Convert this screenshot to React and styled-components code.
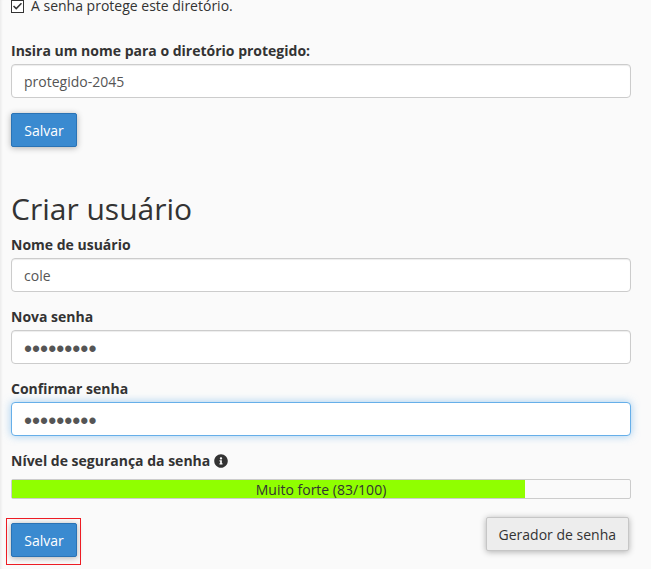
import React, { useState } from "react";
import styled, { createGlobalStyle } from "styled-components";
import { FaInfoCircle } from "react-icons/fa";

const GlobalStyle = createGlobalStyle`
  *, *::before, *::after {
    box-sizing: border-box;
  }

  body {
    margin: 0;
    background: #fafafa;
    color: #333;
    font-family: "Open Sans", "Noto Sans", sans-serif;
    font-size: 14px;
    line-height: 20px;
  }
`;

const Page = styled.main`
  padding: 0 20px 12px 11px;
  box-shadow: inset 3px 0 3px -2px rgba(0, 0, 0, 0.08);
`;

const CheckLabel = styled.label`
  display: flex;
  align-items: flex-start;
  gap: 7px;
  line-height: 11px;
`;

const Checkbox = styled.input`
  appearance: none;
  display: grid;
  place-items: center;
  width: 13px;
  height: 13px;
  margin: 0;
  border: 1px solid #333;
  background: #fff;

  &:checked::before {
    content: "";
    width: 9px;
    height: 8px;
    background: #333;
    clip-path: polygon(0 50%, 12% 38%, 36% 64%, 88% 4%, 100% 16%, 36% 92%);
  }
`;

const DirectoryForm = styled.form`
  padding-top: 28px;
`;

const UserForm = styled.form`
  padding-top: 44px;
`;

const Title = styled.h2`
  margin: 0 0 8px;
  font-size: 30px;
  font-weight: 400;
  line-height: 36px;
`;

const Field = styled.div`
  display: flex;
  flex-direction: column;
  gap: 4px;
  margin-bottom: 15px;
`;

const Label = styled.label`
  font-weight: 700;
  line-height: 19px;
`;

const Input = styled.input`
  width: 100%;
  height: 34px;
  padding: 6px 12px;
  border: 1px solid ${(props) => (props.$active ? "#66afe9" : "#ccc")};
  border-radius: 4px;
  outline: none;
  background: #fff;
  box-shadow: ${(props) =>
    props.$active
      ? "0 0 8px rgba(102, 175, 233, 0.6)"
      : "inset 0 1px 1px rgba(0, 0, 0, 0.075)"};
  color: #555;
  font: inherit;

  &[type="password"] {
    padding: 8px 12px 4px;
    font-family: "Liberation Sans", sans-serif;
    font-size: 23px;
  }
`;

const StrengthLabel = styled.div`
  display: flex;
  align-items: center;
  gap: 4px;
  margin-bottom: 8px;
  font-weight: 700;
  line-height: 20px;
`;

const Meter = styled.div`
  display: grid;
  height: 20px;
  border: 1px solid #ccc;
  border-radius: 2px;
  line-height: 20px;

  > * {
    grid-area: 1 / 1;
  }
`;

const MeterFill = styled.div`
  height: 18px;
  background: #90ff00;
`;

const MeterText = styled.span`
  text-align: center;
`;

const Button = styled.button`
  min-width: 66px;
  height: 34px;
  padding: 7px 12px 5px;
  border: 1px solid ${(props) => (props.$primary ? "#2a73b5" : "#c6c6c6")};
  border-radius: 2px;
  background: ${(props) => (props.$primary ? "#3a8ad0" : "#ededed")};
  box-shadow: 0 1px 6px rgba(0, 0, 0, 0.3);
  color: ${(props) => (props.$primary ? "#fff" : "#333")};
  font: inherit;
  cursor: pointer;
`;

const Actions = styled.div`
  display: flex;
  justify-content: space-between;
  align-items: flex-start;
  padding: 18px 2px 0 0;
`;

const Highlight = styled.div`
  position: relative;
  margin-top: 6px;

  &::after {
    content: "";
    position: absolute;
    inset: -5px -4px -8px -5px;
    border: 1px solid #ed1c24;
    pointer-events: none;
  }
`;

const STRENGTH = 83;

const App = () => {
  const [isProtected, setIsProtected] = useState(true);
  const [directory, setDirectory] = useState("protegido-2045");
  const [user, setUser] = useState("cole");
  const [password, setPassword] = useState("cole-2045");
  const [confirm, setConfirm] = useState("cole-2045");

  const handleSubmit = (e) => {
    e.preventDefault();
  };

  return (
    <Page>
      <GlobalStyle />
      <CheckLabel>
        <Checkbox
          type="checkbox"
          checked={isProtected}
          onChange={(e) => setIsProtected(e.target.checked)}
        />
        A senha protege este diretório.
      </CheckLabel>

      <DirectoryForm onSubmit={handleSubmit}>
        <Field>
          <Label htmlFor="directory">
            Insira um nome para o diretório protegido:
          </Label>
          <Input
            id="directory"
            type="text"
            value={directory}
            onChange={(e) => setDirectory(e.target.value)}
          />
        </Field>
        <Button type="submit" $primary>
          Salvar
        </Button>
      </DirectoryForm>

      <UserForm onSubmit={handleSubmit}>
        <Title>Criar usuário</Title>
        <Field>
          <Label htmlFor="user">Nome de usuário</Label>
          <Input
            id="user"
            type="text"
            value={user}
            onChange={(e) => setUser(e.target.value)}
          />
        </Field>
        <Field>
          <Label htmlFor="password">Nova senha</Label>
          <Input
            id="password"
            type="password"
            value={password}
            onChange={(e) => setPassword(e.target.value)}
          />
        </Field>
        <Field>
          <Label htmlFor="confirm">Confirmar senha</Label>
          <Input
            id="confirm"
            type="password"
            value={confirm}
            onChange={(e) => setConfirm(e.target.value)}
            $active
          />
        </Field>

        <StrengthLabel id="strength">
          Nível de segurança da senha
          <FaInfoCircle size={14} />
        </StrengthLabel>
        <Meter
          role="meter"
          aria-labelledby="strength"
          aria-valuemin={0}
          aria-valuemax={100}
          aria-valuenow={STRENGTH}
        >
          <MeterFill style={{ width: `${STRENGTH}%` }} />
          <MeterText>Muito forte ({STRENGTH}/100)</MeterText>
        </Meter>

        <Actions>
          <Highlight>
            <Button type="submit" $primary>
              Salvar
            </Button>
          </Highlight>
          <Button type="button">Gerador de senha</Button>
        </Actions>
      </UserForm>
    </Page>
  );
};

export default App;
